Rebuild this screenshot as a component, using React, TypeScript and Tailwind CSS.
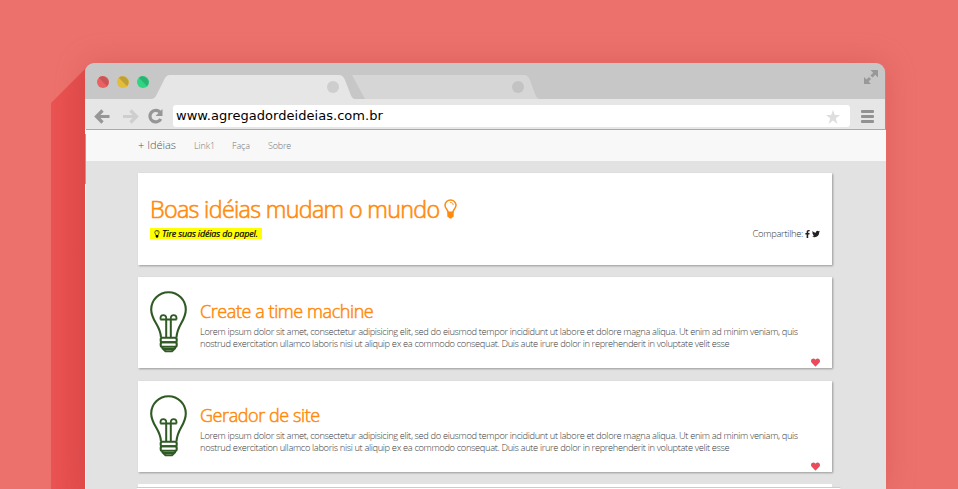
import React from "react";
import { FaFacebookF, FaTwitter, FaHeart } from "react-icons/fa";

const lorem = [
  "Lorem ipsum dolor sit amet, consectetur adipisicing elit, sed do eiusmod tempor incididunt ut labore et dolore magna aliqua. Ut enim ad minim veniam, quis",
  "nostrud exercitation ullamco laboris nisi ut aliquip ex ea commodo consequat. Duis aute irure dolor in reprehenderit in voluptate velit esse",
];

function SmallBulb({ className }: { className: string }) {
  return (
    <svg viewBox="0 0 13 20" className={className} fill="none">
      <path d="M4.2 13.6C4 10.7 1 9.6 1 6.2a5.5 5.3 0 0 1 11 0c0 3.4-3 4.5-3.2 7.4" stroke="currentColor" strokeWidth="1.5" />
      <path d="M6.5 3.4c1.6 0 2.7.8 2.7 2.2" stroke="currentColor" strokeWidth=".9" strokeLinecap="round" />
      <path d="M3.3 12.6h6.4v4.9L8 18.7a1.6 1.4 0 0 1-3 0l-1.7-1.2Z" fill="currentColor" />
    </svg>
  );
}

function LargeBulb() {
  return (
    <svg viewBox="0 0 38 62" className="h-[62px] w-[38px] shrink-0" fill="none" stroke="#2f5a24" strokeWidth="2.1">
      <path d="M11 46.5C10.5 34 1.2 30 1.2 18.5a17.3 17.3 0 0 1 34.6 0C35.8 30 27 34 26.5 46.5" />
      <path d="M16.2 47V28.5M20.8 47V28.5M10.3 28.4h16.4" strokeWidth="2" />
      <path d="M16.2 29v-2c0-4-5.7-3.8-5.7 0v1.5M20.8 29v-2c0-4 5.7-3.8 5.7 0v1.5" strokeWidth="1.8" />
      <rect x="10.7" y="46.8" width="16" height="4.5" rx="1.5" />
      <rect x="10.7" y="51.3" width="16" height="4.4" rx="1.5" />
      <path d="M12.5 56v1.3l3 3h6.5l3-3V56M12.5 58h12.5" />
    </svg>
  );
}

function IdeaCard({ title }: { title: string }) {
  return (
    <article className="flex h-[91px] shrink-0 bg-white pl-[12px] pt-[14px] shadow-[1px_1px_2px_#999]">
      <LargeBulb />
      <div className="flex min-w-0 flex-1 flex-col pl-[12px]">
        <h2 className="mt-[8px] h-[24px] whitespace-nowrap text-[18px] font-light leading-[24px] tracking-[-0.42px] text-[#ff8a0c] [-webkit-text-stroke:0.5px_#ff8a0c]">{title}</h2>
        <div className="mt-[3px] whitespace-nowrap text-[9.3px] font-light leading-[12px] tracking-[-0.347px] text-[#3c3c3c]">
          <p>{lorem[0]}</p>
          <p>{lorem[1]}</p>
        </div>
        <FaHeart className="mr-[12px] mt-[8px] h-[9px] w-[9px] self-end text-[#e94b5b]" />
      </div>
    </article>
  );
}

function TitleBar() {
  return (
    <svg viewBox="0 0 800 36" className="block h-[36px] w-[800px] shrink-0">
      <path d="M0 36V9a9 9 0 0 1 9-9h782a9 9 0 0 1 9 9v27Z" fill="#c7c7c7" />
      <path d="M267 12h172q4 0 6 5l5 14q2 5 5 5H280Z" fill="#d6d6d6" />
      <path d="M66 36q4 0 6-5l7-14q2-5 6-5h169q4 0 6 5l5 13q2 6 5 6Z" fill="#e6e6e6" />
      <circle cx="248" cy="24" r="6" fill="#cecece" />
      <circle cx="433" cy="24" r="6" fill="#c3c3c3" />
      <circle cx="18" cy="19" r="6" fill="#e96163" />
      <circle cx="38" cy="19" r="6" fill="#e2bd3b" />
      <circle cx="58" cy="19" r="6" fill="#2fd582" />
      <path d="M13.8 14.8a6 6 0 0 1 8.4 8.4Z" fill="#c95557" />
      <path d="M33.8 14.8a6 6 0 0 1 8.4 8.4Z" fill="#bfa036" />
      <path d="M53.8 14.8a6 6 0 0 1 8.4 8.4Z" fill="#2bb471" />
      <g fill="#989898" stroke="#989898">
        <path d="M785.5 7h7.5v7.5ZM779 14v7h7Z" stroke="none" />
        <path d="m786.5 13.5 4-4M781 19l4-4" strokeWidth="3" />
      </g>
    </svg>
  );
}

function Toolbar() {
  return (
    <div className="flex h-[30px] w-[800px] shrink-0 items-start bg-[#e6e6e6] pt-[6px]">
      <svg viewBox="0 0 88 22" className="h-[22px] w-[88px] shrink-0" fill="none" strokeWidth="3.2">
        <path d="M24.5 11.5H12M17.5 5.5l-6 6 6 6" stroke="#969696" />
        <path d="M38 11.5h12.5M45.5 5.5l6 6-6 6" stroke="#cecece" />
        <path d="M75 7.2A5.8 5.8 0 1 0 75.8 14" stroke="#969696" />
        <path d="M77.5 4v7h-7Z" fill="#969696" />
      </svg>
      <div className="flex h-[22px] w-[677px] items-center justify-between rounded-[3px] bg-white pl-[3px] pr-[9px]">
        <span className="font-['DejaVu_Sans',sans-serif] text-[13px] leading-[22px] tracking-[0.04px] text-black">www.agregadordeideias.com.br</span>
        <svg viewBox="0 0 16 16" className="mt-px h-[16px] w-[16px]" fill="#dedede">
          <path d="m8 1 1.8 5H15l-4.2 3.2L12.4 15 8 11.5 3.6 15l1.6-5.8L1 6h5.2Z" />
        </svg>
      </div>
      <div className="ml-[11px] mt-[5px] flex flex-col gap-[2px]">
        <i className="block h-[3px] w-[13px] rounded-[1px] bg-[#929292]" />
        <i className="block h-[3px] w-[13px] rounded-[1px] bg-[#929292]" />
        <i className="block h-[3px] w-[13px] rounded-[1px] bg-[#929292]" />
      </div>
    </div>
  );
}

export default function App() {
  return (
    <div className="flex h-[489px] w-[958px] overflow-hidden bg-[#ec716c] font-['Open_Sans',sans-serif]">
      <svg viewBox="0 0 34 489" className="ml-[51px] h-[489px] w-[34px] shrink-0">
        <defs>
          <linearGradient id="side">
            <stop offset="0" stopColor="#e95352" />
            <stop offset="1" stopColor="#e44e4d" />
          </linearGradient>
        </defs>
        <path d="M34 69 0 103v386h34Z" fill="url(#side)" />
      </svg>
      <main className="mt-[63px] flex h-[426px] w-[801px] shrink-0 flex-col rounded-t-[9px] shadow-[0_0_30px_#b3303045]">
        <TitleBar />
        <Toolbar />
        <div className="flex min-h-0 flex-1">
          <div className="flex w-px shrink-0 flex-col bg-[#f4f8f8]">
            <i className="mt-[5px] block h-[50px] bg-[#4fcf88]" />
          </div>
          <div className="flex min-w-0 flex-1 flex-col">
            <nav className="flex h-[32px] shrink-0 items-center border-t border-[#aaa] bg-[#f8f8f8] pl-[52px] font-light text-[#777]">
              <span className="w-[56px] text-[11px] tracking-[0px] text-[#555]">+ Idéias</span>
              <span className="w-[38px] text-[9px] tracking-[-0.1px]">Link1</span>
              <span className="w-[36px] text-[9px] tracking-[-0.1px]">Faça</span>
              <span className="text-[9px] tracking-[-0.2px]">Sobre</span>
            </nav>
            <div className="flex min-h-0 flex-1 flex-col overflow-hidden bg-[#e2e2e2] pt-[12px]">
              <div className="flex shrink-0 flex-col gap-[12px] pl-[52px] pr-[54px]">
                <header className="h-[92px] shrink-0 bg-white px-[12px] pt-[20px] shadow-[1px_1px_2px_#999]">
                  <h1 className="flex h-[32px] items-center whitespace-nowrap text-[23.3px] font-light leading-[32px] tracking-[-0.68px] text-[#ff8a0c] [-webkit-text-stroke:0.6px_#ff8a0c]">
                    Boas idéias mudam o mundo
                    <SmallBulb className="ml-[5px] h-[20px] w-[13px]" />
                  </h1>
                  <div className="mt-[3px] flex items-center justify-between">
                    <em className="flex h-[11px] w-[112px] items-center whitespace-nowrap bg-[#ff0] pl-[4px] text-[9px] leading-[11px] tracking-[-0.17px] text-black [-webkit-text-stroke:0.2px_black]">
                      <SmallBulb className="mr-[2px] h-[8px] w-[6px]" />
                      Tire suas idéias do papel.
                    </em>
                    <div className="flex items-center text-[9.3px] font-light leading-[11px] tracking-[-0.26px] text-[#333]">
                      Compartilhe:
                      <FaFacebookF className="ml-[2px] h-[8px] w-[5px] text-[#222]" />
                      <FaTwitter className="ml-[2px] h-[8px] w-[8px] text-[#222]" />
                    </div>
                  </div>
                </header>
                <IdeaCard title="Create a time machine" />
                <div className="mt-px">
                  <IdeaCard title="Gerador de site" />
                </div>
              </div>
              <div className="ml-[52px] mr-[54px] mt-[12px] h-[3px] shrink-0 bg-white" />
              <div className="ml-[50px] mr-[45px] h-[2px] shrink-0 rounded-t-[2px] border-t border-[#ccc] bg-white" />
            </div>
          </div>
        </div>
      </main>
    </div>
  );
}
